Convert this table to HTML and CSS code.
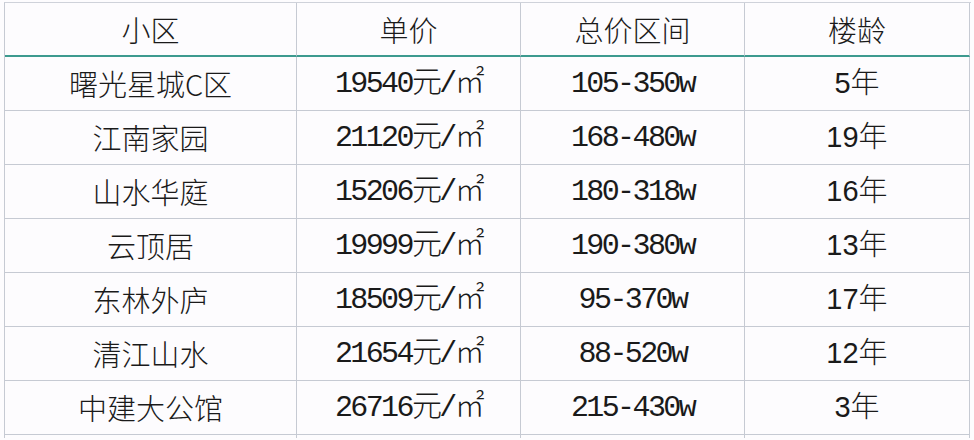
FILE: index.html
```html
<!DOCTYPE html>
<html lang="zh-CN">
<head>
<meta charset="utf-8">
<title>小区房价</title>
<link rel="stylesheet" href="styles.css">
</head>
<body>
<div class="sheet">
  <div class="cell head">小区</div>
  <div class="cell head">单价</div>
  <div class="cell head">总价区间</div>
  <div class="cell head">楼龄</div>

  <div class="cell name">曙光星城C区</div>
  <div class="cell mono">19540元/㎡</div>
  <div class="cell mono">105-350w</div>
  <div class="cell age">5年</div>

  <div class="cell name">江南家园</div>
  <div class="cell mono">21120元/㎡</div>
  <div class="cell mono">168-480w</div>
  <div class="cell age">19年</div>

  <div class="cell name">山水华庭</div>
  <div class="cell mono">15206元/㎡</div>
  <div class="cell mono">180-318w</div>
  <div class="cell age">16年</div>

  <div class="cell name">云顶居</div>
  <div class="cell mono">19999元/㎡</div>
  <div class="cell mono">190-380w</div>
  <div class="cell age">13年</div>

  <div class="cell name">东林外庐</div>
  <div class="cell mono">18509元/㎡</div>
  <div class="cell mono">95-370w</div>
  <div class="cell age">17年</div>

  <div class="cell name">清江山水</div>
  <div class="cell mono">21654元/㎡</div>
  <div class="cell mono">88-520w</div>
  <div class="cell age">12年</div>

  <div class="cell name">中建大公馆</div>
  <div class="cell mono">26716元/㎡</div>
  <div class="cell mono">215-430w</div>
  <div class="cell age">3年</div>

  <div class="cell blank"></div>
  <div class="cell blank"></div>
  <div class="cell blank"></div>
  <div class="cell blank"></div>
</div>
</body>
</html>
```

FILE: styles.css
```css
html, body {
  margin: 0;
  padding: 0;
  background: #fdfcfe;
}

body {
  padding: 2px 0 0 4px;
  font-family: "Noto Sans CJK SC", "Noto Sans", sans-serif;
  color: #1a1a1a;
  overflow: hidden;
}

.sheet {
  display: grid;
  grid-template-columns: 292px 224px 224px 225px;
  grid-template-rows: repeat(8, 54px) 3px;
  border-top: 1px solid #cfd2da;
  border-left: 1px solid #c6cad3;
  width: 966px;
}

.cell {
  border-right: 1px solid #c6cad3;
  border-bottom: 1px solid #c6cad3;
  display: flex;
  align-items: center;
  justify-content: center;
  font-size: 29px;
  font-weight: 300;
  line-height: 1;
  white-space: nowrap;
  overflow: hidden;
}

.head {
  border-bottom: 2px solid #3d9a8f;
}

.mono {
  font-family: "Liberation Mono", "Noto Sans CJK SC", monospace;
  font-size: 30px;
  letter-spacing: -2.6px;
}

.age {
  font-family: "Liberation Sans", "Noto Sans CJK SC", sans-serif;
  font-size: 29px;
}

.blank {
  border-bottom: none;
}
```
